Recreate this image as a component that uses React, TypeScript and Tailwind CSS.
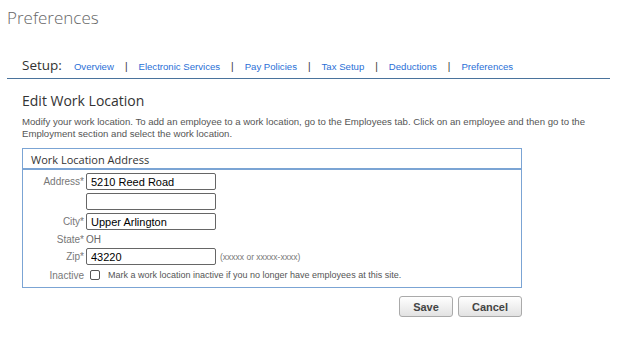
import React from "react";

const links = [
  "Overview",
  "Electronic Services",
  "Pay Policies",
  "Tax Setup",
  "Deductions",
  "Preferences",
];

function Field({ label, children }: { label: string; children: React.ReactNode }) {
  return (
    <div className="flex items-center">
      <div className="w-[63px] pr-[2px] text-right text-[10px] text-[#777]">{label}</div>
      {children}
    </div>
  );
}

function TextBox({ value }: { value: string }) {
  return (
    <input
      readOnly
      value={value}
      className="h-[17px] w-[130px] rounded-[2px] border border-[#666] bg-white px-[4px] text-[11px] text-black outline-none"
    />
  );
}

export default function App() {
  return (
    <div className="h-[337px] w-[636px] bg-white font-['Liberation_Sans',Arial,sans-serif]">
      <h1 className="pl-[7px] pt-[6px] font-['Open_Sans',sans-serif] text-[17px] font-light leading-[24px] text-[#666]">
        Preferences
      </h1>

      {/* setup nav */}
      <div className="ml-[7px] mt-[27px] w-[603px] border-b-[1.5px] border-[#4a739c] pb-[4px] pl-[15px]">
        <div className="flex items-baseline">
          <span className="mr-[12px] font-['Open_Sans',sans-serif] text-[13.5px] leading-[16px] text-[#333]">
            Setup:
          </span>
          {links.map((l, i) => (
            <React.Fragment key={l}>
              <a className="text-[9.6px] text-[#2a6fd6]">{l}</a>
              {i < links.length - 1 && (
                <span className="mx-[11px] text-[10px] text-[#333]">|</span>
              )}
            </React.Fragment>
          ))}
        </div>
      </div>

      <div className="pl-[22px]">
        <h2 className="mt-[13px] font-['Open_Sans',sans-serif] text-[14px] leading-[18px] text-[#333]">
          Edit Work Location
        </h2>
        <p className="mt-[6px] text-[9.6px] leading-[12px] text-[#555]">
          Modify your work location. To add an employee to a work location, go to the Employees tab. Click on an employee and then go to the
          <br />
          Employment section and select the work location.
        </p>

        <div className="mt-[8px] w-[500px] border border-[#7ba4d4]">
          <div className="h-[21px] border-b-2 border-[#7ba4d4] pl-[8px] font-['Open_Sans',sans-serif] text-[11px] leading-[21px] text-[#333]">
            Work Location Address
          </div>
          <div className="flex flex-col gap-[3px] pb-[5px] pt-[3px]">
            <Field label="Address*">
              <TextBox value="5210 Reed Road" />
            </Field>
            <Field label="">
              <TextBox value="" />
            </Field>
            <Field label="City*">
              <TextBox value="Upper Arlington" />
            </Field>
            <div className="flex h-[12px] items-center">
              <div className="w-[63px] pr-[2px] text-right text-[10px] text-[#777]">State*</div>
              <span className="text-[10px] text-[#666]">OH</span>
            </div>
            <Field label="Zip*">
              <TextBox value="43220" />
              <span className="ml-[4px] text-[8.5px] text-[#777]">(xxxxx or xxxxx-xxxx)</span>
            </Field>
            <div className="flex h-[14px] items-center">
              <div className="w-[63px] pr-[2px] text-right text-[10px] text-[#777]">Inactive</div>
              <span className="ml-[4px] h-[10px] w-[10px] rounded-[2px] border border-[#555] bg-white" />
              <span className="ml-[8px] text-[9px] text-[#555]">
                Mark a work location inactive if you no longer have employees at this site.
              </span>
            </div>
          </div>
        </div>

        <div className="mt-[8px] flex w-[500px] justify-end gap-[5px]">
          <button className="h-[21px] w-[54px] rounded-[3px] border border-[#aaa] bg-gradient-to-b from-white to-[#e2e2e2] text-[11px] font-bold text-[#444]">
            Save
          </button>
          <button className="h-[21px] w-[64px] rounded-[3px] border border-[#aaa] bg-gradient-to-b from-white to-[#e2e2e2] text-[11px] font-bold text-[#444]">
            Cancel
          </button>
        </div>
      </div>
    </div>
  );
}
